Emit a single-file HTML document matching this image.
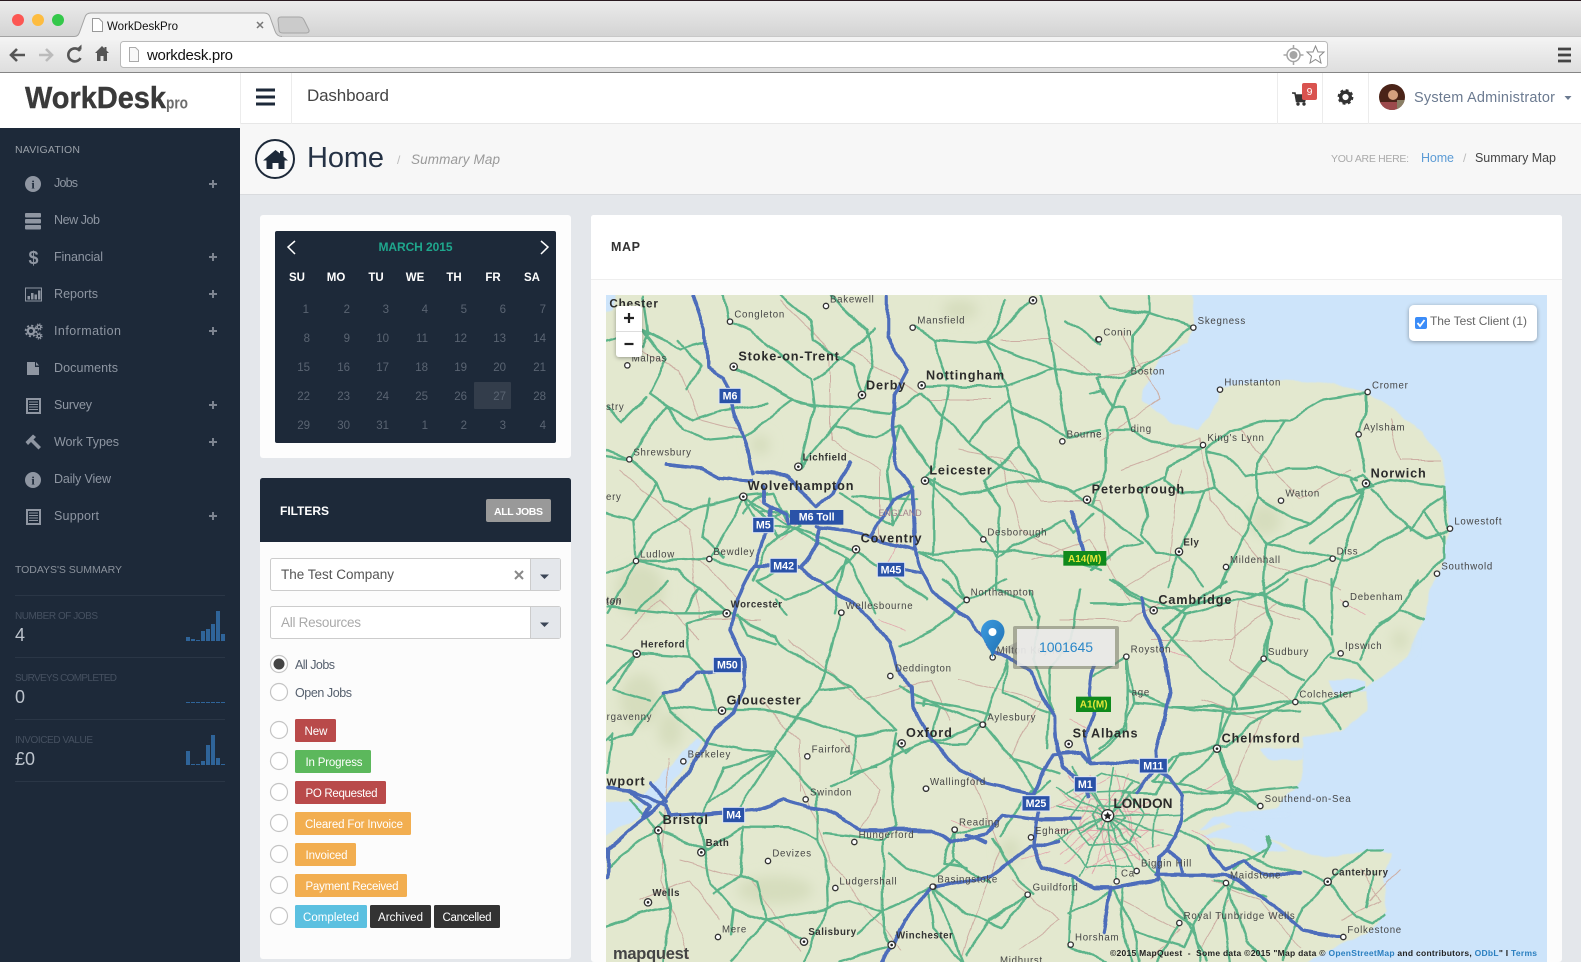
<!DOCTYPE html>
<html lang="en">
<head>
<meta charset="utf-8">
<title>WorkDeskPro</title>
<style>
html,body{margin:0;padding:0;width:1581px;height:962px;overflow:hidden;background:#e4e7eb}
svg{display:block;font-family:"Liberation Sans",sans-serif}
.g{fill:none;stroke:#5cb48a;stroke-width:7;stroke-linejoin:round;stroke-linecap:round}
.m{fill:none;stroke:#cdaea3;stroke-width:1;stroke-linejoin:round}
.r{fill:none;stroke:#e2a8ad;stroke-width:.9}
.c{font-weight:bold;font-size:38px;letter-spacing:2.6px;fill:#2b2b2b}
.s{font-size:29px;letter-spacing:2.2px;fill:#454545}
.b2{font-weight:bold;font-size:29px;letter-spacing:1.6px;fill:#333}
.sh{font-weight:bold;font-size:32px;fill:#fff;text-anchor:middle}
.nav{font-size:12.5px;fill:#8e96a2}
.sl{font-size:10px;fill:#465161}
.sv{font-size:18px;fill:#bcc3cc}
.wd{font-size:11.5px;font-weight:bold;fill:#fff;text-anchor:middle}
.dy{font-size:11.5px;fill:#5a6472;text-anchor:end}
.st{font-size:11.5px;fill:#fff;text-anchor:middle}
.tw{fill:#fff;stroke:#333;stroke-width:4}
</style>
</head>
<body>
<svg width="1581" height="962" viewBox="0 0 1581 962" xmlns="http://www.w3.org/2000/svg">
<defs>
<linearGradient id="tb" x1="0" y1="0" x2="0" y2="1"><stop offset="0" stop-color="#ececec"/><stop offset="1" stop-color="#d3d3d3"/></linearGradient>
<linearGradient id="tl" x1="0" y1="0" x2="0" y2="1"><stop offset="0" stop-color="#f4f4f4"/><stop offset="1" stop-color="#dedede"/></linearGradient>
<linearGradient id="pin" x1="0" y1="0" x2="1" y2="1"><stop offset="0" stop-color="#3d9be0"/><stop offset="1" stop-color="#1f6fb0"/></linearGradient>
<clipPath id="mc"><rect x="606" y="295" width="941" height="667"/></clipPath>
<clipPath id="av"><circle cx="1392" cy="97" r="13"/></clipPath>
<filter id="sd" x="-20%" y="-20%" width="140%" height="150%"><feDropShadow dx="0" dy="1" stdDeviation="2" flood-color="#000" flood-opacity=".35"/></filter>
<filter id="wob" filterUnits="userSpaceOnUse" x="596" y="285" width="961" height="687" color-interpolation-filters="sRGB"><feTurbulence type="fractalNoise" baseFrequency=".035" numOctaves="2" seed="4" result="n"/><feDisplacementMap in="SourceGraphic" in2="n" scale="7" xChannelSelector="R" yChannelSelector="G"/><feGaussianBlur stdDeviation=".35"/></filter>
<filter id="soft" filterUnits="userSpaceOnUse" x="596" y="285" width="961" height="687"><feGaussianBlur stdDeviation="6"/></filter>
<filter id="coast" filterUnits="userSpaceOnUse" x="596" y="285" width="961" height="687" color-interpolation-filters="sRGB"><feTurbulence type="fractalNoise" baseFrequency=".05" numOctaves="2" seed="9" result="n"/><feDisplacementMap in="SourceGraphic" in2="n" scale="6" xChannelSelector="R" yChannelSelector="G"/><feGaussianBlur stdDeviation=".5"/></filter>
</defs>

<!-- Page background -->
<rect width="1581" height="962" fill="#e4e7eb"/>

<!-- Browser chrome -->
<rect width="1581" height="37" fill="url(#tb)"/>
<rect width="1581" height="1" fill="#2a1a20"/>
<rect y="36" width="1581" height="1" fill="#9c9c9c"/>
<rect y="37" width="1581" height="35" fill="url(#tl)"/>
<rect y="72" width="1581" height="1" fill="#858585"/>
<circle cx="18" cy="20" r="6" fill="#fc5753"/><circle cx="38" cy="20" r="6" fill="#fdbc40"/><circle cx="58" cy="20" r="6" fill="#34c84a"/>
<path d="M0,36.5H74C78,36.5 79,34 80,31L85,17C86,14 88,13 91,13H264C267,13 269,14 270,17L275,31C276,34 278,36.5 282,36.5H1581V40H0Z" fill="#f3f3f3"/>
<path d="M0,36.5H74C78,36.5 79,34 80,31L85,17C86,14 88,13 91,13H264C267,13 269,14 270,17L275,31C276,34 278,36.5 282,36.5" fill="none" stroke="#a3a3a3"/>
<path d="M278,20C278,18 279,17 281,17H299C302,17 303,18 304,20L309,30C309.5,32 308,33 306,33H283C280,33 279,32 279,30Z" fill="#cbcbcb" stroke="#a5a5a5"/>
<path d="M92.5,18.5H99L102.5,22V31.5H92.5Z" fill="#fff" stroke="#999"/>
<text x="107" y="30" font-size="11.5" fill="#111" textLength="71">WorkDeskPro</text>
<path d="M257,22L263,28M263,22L257,28" stroke="#777" stroke-width="1.5"/>
<path d="M25,55H11M17,49L11,55L17,61" fill="none" stroke="#555" stroke-width="2.6"/>
<path d="M39,55H52M46,49L52,55L46,61" fill="none" stroke="#bbb" stroke-width="2.6"/>
<path d="M80,51A6.5,6.5 0 1 0 80.5,58" fill="none" stroke="#555" stroke-width="2.6"/><path d="M76,49.5H81.5V44.5Z" fill="#555"/>
<path d="M102,46L95,53H97V61H100.5V56H103.5V61H107V53H109L106.500,50.500V47H104.500V48.500Z" fill="#555"/>
<rect x="120.5" y="41.5" width="1207" height="26" rx="3" fill="#fff" stroke="#b9b9b9"/>
<path d="M129.5,47.5H135.5L138.5,50.5V61.5H129.5Z" fill="#f8f8f8" stroke="#aaa"/>
<text x="147" y="60" font-size="15" fill="#111" textLength="86">workdesk.pro</text>
<circle cx="1293.5" cy="55" r="6.5" fill="none" stroke="#a5a5a5" stroke-width="1.5"/><circle cx="1293.5" cy="55" r="4" fill="#a5a5a5"/><path d="M1293.5,45V48.5M1293.5,61.5V65M1283.5,55H1287M1300,55H1303.5" stroke="#a5a5a5" stroke-width="1.5"/>
<path d="M1315.5,46L1318,52H1324L1319.5,56.2L1321,63L1315.5,59.5L1310,63L1311.5,56.2L1307,52H1313Z" fill="#fff" stroke="#8a8a8a"/>
<path d="M1558,49H1571M1558,55H1571M1558,61H1571" stroke="#444" stroke-width="2.8"/>

<!-- App top bar -->
<rect y="73" width="1581" height="51" fill="#fff"/>
<rect y="123" x="240" width="1341" height="1" fill="#e7e7e7"/>
<rect x="0" y="73" width="240" height="55" fill="#fff"/>
<rect x="240" y="73" width="1" height="51" fill="#ececec"/><rect x="291" y="73" width="1" height="51" fill="#ececec"/>
<rect x="1277" y="73" width="1" height="51" fill="#ececec"/><rect x="1322" y="73" width="1" height="51" fill="#ececec"/><rect x="1368" y="73" width="1" height="51" fill="#ececec"/>
<text x="25" y="108" font-size="31" font-weight="bold" fill="#3a3a3a" stroke="#3a3a3a" stroke-width=".4" textLength="141" lengthAdjust="spacingAndGlyphs">WorkDesk</text>
<text x="166" y="108.5" font-size="17" font-weight="bold" fill="#6c6c6c" textLength="22" lengthAdjust="spacingAndGlyphs">pro</text>
<path d="M256,90H275M256,97H275M256,104H275" stroke="#1d2939" stroke-width="3"/>
<text x="307" y="101" font-size="17" fill="#444" textLength="82">Dashboard</text>
<path d="M1292,93H1295L1296.5,101.5H1304.5L1306.5,95H1296" fill="#333" stroke="#333" stroke-width="1.5"/><circle cx="1298" cy="104" r="1.7" fill="#333"/><circle cx="1304" cy="104" r="1.7" fill="#333"/>
<rect x="1302" y="83" width="15" height="17" rx="2" fill="#d9534f"/><text x="1309.5" y="95" font-size="10.5" fill="#fff" text-anchor="middle">9</text>
<g transform="translate(1345.5,97)"><circle r="4.8" fill="none" stroke="#333" stroke-width="3.4"/><circle r="6.7" fill="none" stroke="#333" stroke-width="2.4" stroke-dasharray="2.8 2.46"/></g>
<g clip-path="url(#av)"><rect x="1379" y="84" width="26" height="26" fill="#4a2318"/><rect x="1379" y="102" width="26" height="8" fill="#9c4a4c"/><circle cx="1393" cy="95" r="5" fill="#d59f7e"/><rect x="1397" y="100" width="8" height="10" fill="#8a7f66"/></g>
<text x="1414" y="102" font-size="14.5" fill="#6b7a90" textLength="141">System Administrator</text>
<path d="M1564.5,96H1571.5L1568,100Z" fill="#6b7a90"/>

<!-- Page heading -->
<rect x="240" y="124" width="1341" height="70" fill="#f7f7f7"/>
<rect x="240" y="194" width="1341" height="1" fill="#d9dbde"/>
<circle cx="275" cy="159" r="19" fill="#fff" fill-opacity=".4" stroke="#1d2939" stroke-width="2"/>
<path d="M275.5,150L263,160.5H266.5V169H272.5V163H278.5V169H284.5V160.5H288L283.5,156.5V151H280V153.5Z" fill="#1d2939"/>
<text x="307" y="167" font-size="29" fill="#253245" textLength="77">Home</text>
<text x="397" y="164" font-size="12" fill="#bbb">/</text>
<text x="411" y="164" font-size="13.5" font-style="italic" fill="#9a9a9a" textLength="89">Summary Map</text>
<text x="1331" y="162" font-size="10.5" fill="#aaa" textLength="78">YOU ARE HERE:</text>
<text x="1421" y="162" font-size="12.5" fill="#5b9bd5" textLength="33">Home</text>
<text x="1463" y="162" font-size="12" fill="#bbb">/</text>
<text x="1475" y="162" font-size="12.5" fill="#444" textLength="81">Summary Map</text>

<!-- Sidebar -->
<rect x="0" y="128" width="240" height="834" fill="#1d2939"/>
<text x="15" y="153" font-size="10.5" fill="#9aa0a8" textLength="65">NAVIGATION</text>
<g fill="#8f96a2">
<circle cx="33" cy="184" r="8"/><text x="33" y="188.5" font-size="12" font-weight="bold" fill="#1d2939" text-anchor="middle" font-family="Liberation Serif">i</text>
<rect x="25" y="213" width="16" height="4.5" rx="1"/><rect x="25" y="219" width="16" height="4.5" rx="1"/><rect x="25" y="225" width="16" height="4.5" rx="1"/>
<text x="33.5" y="264" font-size="18" font-weight="bold" text-anchor="middle">$</text>
<path d="M25.5,288H41.5V301H25.5Z" fill="none" stroke="#8f96a2" stroke-width="1"/><rect x="27.5" y="296" width="2.5" height="3.5"/><rect x="31" y="293" width="2.5" height="6.5"/><rect x="34.5" y="294.5" width="2.5" height="5"/><rect x="38" y="290.5" width="2.5" height="9"/>
<g transform="translate(31,331)"><circle r="3.2" fill="none" stroke="#8f96a2" stroke-width="2.4"/><circle r="5.4" fill="none" stroke="#8f96a2" stroke-width="1.8" stroke-dasharray="2.1 2.14"/></g>
<g transform="translate(39,327)"><circle r="1.8" fill="none" stroke="#8f96a2" stroke-width="1.4"/><circle r="3" fill="none" stroke="#8f96a2" stroke-width="1.2" stroke-dasharray="1.2 1.15"/></g>
<g transform="translate(39,336)"><circle r="1.8" fill="none" stroke="#8f96a2" stroke-width="1.4"/><circle r="3" fill="none" stroke="#8f96a2" stroke-width="1.2" stroke-dasharray="1.2 1.15"/></g>
<path d="M27,362H35V367H39V375H27ZM36,362L39,365.5H36Z"/>
<path d="M26,398H41V414H26ZM28,400V412H39V400Z"/><path d="M29,402H38M29,404.5H38M29,407H38M29,409.5H38" stroke="#8f96a2"/>
<path d="M25.5,442L33,434.5L36,437L33.5,439.5L41,447L38.5,449.5L31,442L28,445Z"/>
<circle cx="33" cy="480" r="8"/><text x="33" y="484.5" font-size="12" font-weight="bold" fill="#1d2939" text-anchor="middle" font-family="Liberation Serif">i</text>
<path d="M26,509H41V525H26ZM28,511V523H39V511Z"/><path d="M29,513H38M29,515.5H38M29,518H38M29,520.5H38" stroke="#8f96a2"/>
</g>
<text class="nav" x="54" y="187" textLength="24">Jobs</text>
<text class="nav" x="54" y="224" textLength="46">New Job</text>
<text class="nav" x="54" y="261" textLength="49">Financial</text>
<text class="nav" x="54" y="298" textLength="44">Reports</text>
<text class="nav" x="54" y="335" textLength="67">Information</text>
<text class="nav" x="54" y="372" textLength="64">Documents</text>
<text class="nav" x="54" y="409" textLength="38">Survey</text>
<text class="nav" x="54" y="446" textLength="65">Work Types</text>
<text class="nav" x="54" y="483" textLength="57">Daily View</text>
<text class="nav" x="54" y="520" textLength="45">Support</text>
<g fill="#7d8490"><path d="M209,183H217V185H209ZM212,180H214V188H212Z"/><path d="M209,256H217V258H209ZM212,253H214V261H212Z"/><path d="M209,293H217V295H209ZM212,290H214V298H212Z"/><path d="M209,330H217V332H209ZM212,327H214V335H212Z"/><path d="M209,404H217V406H209ZM212,401H214V409H212Z"/><path d="M209,441H217V443H209ZM212,438H214V446H212Z"/><path d="M209,515H217V517H209ZM212,512H214V520H212Z"/></g>
<text x="15" y="573" font-size="10.5" fill="#8b929c" textLength="107">TODAYS'S SUMMARY</text>
<g fill="#2a3646"><rect x="15" y="595" width="210" height="1"/><rect x="15" y="657" width="210" height="1"/><rect x="15" y="719" width="210" height="1"/><rect x="15" y="781" width="210" height="1"/></g>
<text class="sl" x="15" y="619" textLength="83">NUMBER OF JOBS</text><text class="sv" x="15" y="641">4</text>
<text class="sl" x="15" y="681" textLength="102">SURVEYS COMPLETED</text><text class="sv" x="15" y="703">0</text>
<text class="sl" x="15" y="743" textLength="78">INVOICED VALUE</text><text class="sv" x="15" y="765">£0</text>
<g fill="#2f6499">
<rect x="186" y="637" width="4" height="4"/><rect x="191" y="639" width="4" height="2"/><rect x="196" y="640" width="4" height="1"/><rect x="201" y="631" width="4" height="10"/><rect x="206" y="629" width="4" height="12"/><rect x="211" y="624" width="4" height="17"/><rect x="216" y="611" width="4" height="30"/><rect x="221" y="634" width="4" height="7"/>
<rect x="186" y="702" width="4" height="1"/><rect x="191" y="702" width="4" height="1"/><rect x="196" y="702" width="4" height="1"/><rect x="201" y="702" width="4" height="1"/><rect x="206" y="702" width="4" height="1"/><rect x="211" y="702" width="4" height="1"/><rect x="216" y="702" width="4" height="1"/><rect x="221" y="702" width="4" height="1"/>
<rect x="186" y="751" width="4" height="14"/><rect x="191" y="764" width="4" height="1"/><rect x="196" y="764" width="4" height="1"/><rect x="201" y="761" width="4" height="4"/><rect x="206" y="745" width="4" height="20"/><rect x="211" y="735" width="4" height="30"/><rect x="216" y="758" width="4" height="7"/><rect x="221" y="764" width="4" height="1"/>
</g>

<!-- Calendar card -->
<rect x="260" y="215" width="311" height="243" rx="3" fill="#fdfdfd"/>
<rect x="275" y="231" width="281" height="212" rx="2" fill="#1d2939"/>
<path d="M295,241L288,247L295,254M541,241L548,247L541,254" fill="none" stroke="#fff" stroke-width="1.5"/>
<text x="415.5" y="251" font-size="12" font-weight="bold" fill="#1fa78d" text-anchor="middle" textLength="74">MARCH 2015</text>
<text class="wd" x="297" y="281">SU</text><text class="wd" x="336" y="281">MO</text><text class="wd" x="376" y="281">TU</text><text class="wd" x="415" y="281">WE</text><text class="wd" x="454" y="281">TH</text><text class="wd" x="493" y="281">FR</text><text class="wd" x="532" y="281">SA</text>
<rect x="474" y="382" width="37" height="27" rx="1" fill="#333d4b"/>
<text class="dy" x="309" y="313">1</text><text class="dy" x="350" y="313">2</text><text class="dy" x="389" y="313">3</text><text class="dy" x="428" y="313">4</text><text class="dy" x="467" y="313">5</text><text class="dy" x="506" y="313">6</text><text class="dy" x="546" y="313">7</text>
<text class="dy" x="310" y="342">8</text><text class="dy" x="350" y="342">9</text><text class="dy" x="389" y="342">10</text><text class="dy" x="428" y="342">11</text><text class="dy" x="467" y="342">12</text><text class="dy" x="506" y="342">13</text><text class="dy" x="546" y="342">14</text>
<text class="dy" x="310" y="371">15</text><text class="dy" x="350" y="371">16</text><text class="dy" x="389" y="371">17</text><text class="dy" x="428" y="371">18</text><text class="dy" x="467" y="371">19</text><text class="dy" x="506" y="371">20</text><text class="dy" x="546" y="371">21</text>
<text class="dy" x="310" y="400">22</text><text class="dy" x="350" y="400">23</text><text class="dy" x="389" y="400">24</text><text class="dy" x="428" y="400">25</text><text class="dy" x="467" y="400">26</text><text class="dy" x="506" y="400">27</text><text class="dy" x="546" y="400">28</text>
<text class="dy" x="310" y="429">29</text><text class="dy" x="350" y="429">30</text><text class="dy" x="389" y="429">31</text><text class="dy" x="428" y="429">1</text><text class="dy" x="467" y="429">2</text><text class="dy" x="506" y="429">3</text><text class="dy" x="546" y="429">4</text>

<!-- Filters card -->
<rect x="260" y="478" width="311" height="481" rx="3" fill="#fcfcfc"/>
<path d="M260,542V481C260,479 261,478 263,478H568C570,478 571,479 571,481V542Z" fill="#1d2939"/>
<text x="280" y="515" font-size="12" font-weight="bold" fill="#fff" textLength="49">FILTERS</text>
<rect x="486" y="499" width="65" height="23" rx="2" fill="#999"/>
<text x="518.5" y="515" font-size="10.5" font-weight="bold" fill="#fff" text-anchor="middle" textLength="49">ALL JOBS</text>
<rect x="270.5" y="558.5" width="290" height="32" rx="2" fill="#fff" stroke="#ccc"/>
<rect x="530" y="559" width="30" height="31" fill="#e4e7eb"/><rect x="530" y="559" width="1" height="31" fill="#ccc"/>
<path d="M540,574.5H549L544.5,579Z" fill="#3a4556"/>
<text x="281" y="579" font-size="13.5" fill="#555" textLength="113">The Test Company</text>
<path d="M515,571L523,579M523,571L515,579" stroke="#888" stroke-width="2"/>
<rect x="270.5" y="606.5" width="290" height="32" rx="2" fill="#fff" stroke="#ccc"/>
<rect x="530" y="607" width="30" height="31" fill="#e4e7eb"/><rect x="530" y="607" width="1" height="31" fill="#ccc"/>
<path d="M540,622.5H549L544.5,627Z" fill="#3a4556"/>
<text x="281" y="627" font-size="13.5" fill="#aaa" textLength="80">All Resources</text>
<g fill="#fff" stroke="#c4c4c4" stroke-width="1.2">
<circle cx="279" cy="664" r="8.5"/><circle cx="279" cy="692" r="8.5"/><circle cx="279" cy="730" r="8.5"/><circle cx="279" cy="761" r="8.5"/><circle cx="279" cy="792" r="8.5"/><circle cx="279" cy="823" r="8.5"/><circle cx="279" cy="854" r="8.5"/><circle cx="279" cy="885" r="8.5"/><circle cx="279" cy="916" r="8.5"/></g>
<circle cx="279" cy="664" r="5.5" fill="#444"/>
<text x="295" y="669" font-size="12.5" fill="#56606e" textLength="40">All Jobs</text>
<text x="295" y="697" font-size="12.5" fill="#56606e" textLength="57">Open Jobs</text>
<rect x="295" y="719" width="41" height="23" rx="1.5" fill="#b94a4a"/><text class="st" x="316" y="735">New</text>
<rect x="295" y="750" width="76" height="23" rx="1.5" fill="#5cb85c"/><text class="st" x="334" y="766" textLength="57">In Progress</text>
<rect x="295" y="781" width="91" height="23" rx="1.5" fill="#b94a4a"/><text class="st" x="341.500" y="797" textLength="72">PO Requested</text>
<rect x="295" y="812" width="116" height="23" rx="1.5" fill="#f2ae50"/><text class="st" x="354" y="828" textLength="98">Cleared For Invoice</text>
<rect x="295" y="843" width="61" height="23" rx="1.5" fill="#f2ae50"/><text class="st" x="326.500" y="859" textLength="42">Invoiced</text>
<rect x="295" y="874" width="112" height="23" rx="1.5" fill="#f2ae50"/><text class="st" x="352" y="890" textLength="93">Payment Received</text>
<rect x="295" y="905" width="72" height="23" rx="1.5" fill="#5bc0e0"/><text class="st" x="331" y="921" textLength="56">Completed</text>
<rect x="370" y="905" width="61" height="23" rx="1.5" fill="#333"/><text class="st" x="400.5" y="921" textLength="45">Archived</text>
<rect x="434" y="905" width="66" height="23" rx="1.5" fill="#333"/><text class="st" x="467" y="921" textLength="49">Cancelled</text>

<!-- Map card -->
<rect x="591" y="215" width="971" height="747" rx="3" fill="#fcfcfc"/>
<path d="M591,279V218C591,216 592,215 594,215H1559C1561,215 1562,216 1562,218V279Z" fill="#fff"/>
<rect x="591" y="279" width="971" height="1" fill="#eeeeee"/>
<text x="611" y="251" font-size="12.5" font-weight="bold" fill="#333" textLength="29">MAP</text>

<g clip-path="url(#mc)">
<rect x="606" y="295" width="941" height="667" fill="#cde4fa"/>
<g filter="url(#coast)">
<path d="M596,285H1192L1193,328L1187,343L1160,357L1143,390L1142,400L1170,423L1198,430L1218,403L1220,387L1277,380L1323,383L1367,392L1390,407L1423,433L1443,460L1447,500L1450,530L1443,560L1430,590L1423,623L1407,657L1377,680L1367,687L1367,710L1342,733L1303,737L1302,780L1277,807L1213,817L1200,830L1223,823L1303,850L1323,857L1380,850L1393,853L1383,880L1387,913L1367,933L1323,953L1290,972H596Z" fill="#e3e8cf"/>
<path d="M600,800L643,803L640,817L617,830L600,840Z" fill="#cde4fa"/>
<path d="M640,800L660,777L697,737L702,742L672,782L650,812Z" fill="#cde4fa"/>
<path d="M600,290H617L612,310L600,312Z" fill="#cde4fa"/>
<path d="M1260,750L1303,747L1302,760L1268,760Z" fill="#cde4fa"/>
<path d="M1330,680L1365,680L1367,690L1335,693Z" fill="#cde4fa"/>
<ellipse cx="1270" cy="815" rx="20" ry="3" fill="#cde4fa"/>
<path d="M1200,835L1240,825L1290,850L1260,852L1230,840Z" fill="#cde4fa"/>
</g>
<g fill="#d6ddbd" filter="url(#soft)">
<ellipse cx="775" cy="890" rx="38" ry="14"/><ellipse cx="1265" cy="520" rx="16" ry="16"/><ellipse cx="670" cy="730" rx="12" ry="18"/><ellipse cx="760" cy="445" rx="10" ry="10"/><ellipse cx="1400" cy="640" rx="8" ry="10"/><ellipse cx="640" cy="590" rx="24" ry="26"/><ellipse cx="640" cy="700" rx="20" ry="26"/><ellipse cx="960" cy="310" rx="18" ry="10"/><ellipse cx="1010" cy="850" rx="10" ry="12"/>
</g>

<g filter="url(#wob)">
<!-- Minor roads -->
<path class="m" d="M640,350L680,370L700,420L740,430M620,470L690,530L700,620L760,620M640,560L700,560L740,600M780,300L830,350L830,440L880,470L880,540M850,350L930,400L990,400M960,450L1010,460L1040,500L1100,500L1110,560M1000,340L1050,340L1100,380L1180,350M1120,470L1200,440L1210,500L1260,560L1340,590M1240,430L1300,500L1350,470M1440,460L1400,460L1390,420M1300,620L1240,600L1230,660L1290,700M1150,640L1230,640L1280,600M1200,700L1260,720L1230,790M1060,620L1130,620L1170,600M790,640L860,700L930,680L950,720M800,780L830,860L860,900L900,950M680,860L750,880L800,950M670,760L660,880L690,960M960,680L1040,700L1010,760M970,770L1000,850L960,960M1130,600L1090,540L1030,560M1210,880L1260,900L1300,950M1360,870L1380,900L1340,920M1000,460L1020,530L1080,560M620,640L660,600L700,640M1120,330L1160,400L1100,440M1180,470L1170,560L1120,590M840,740L880,790L860,830M760,700L800,740L800,790M640,900L690,880L720,920M1010,880L1060,920L1020,950M1120,900L1180,930L1150,960M1230,900L1200,950M1400,870L1370,900"/>
<!-- London street mesh -->
<path class="r" d="M1060,790L1140,860M1060,805L1160,815M1075,850L1150,800M1090,775L1110,870M1130,775L1092,875M1055,830L1165,830M1070,775L1150,855M1145,780L1065,865M1075,790L1130,860M1050,810L1115,775M1100,865L1160,845M1085,870L1150,830M1065,840L1120,790M1115,770L1140,860M1060,855L1135,790M1090,800L1120,800L1130,830L1100,845L1080,825Z"/>
<path class="r" d="M1190,830L1215,845M1200,790L1225,775M1020,860L1050,850M760,500L790,525M780,540L810,510M900,540L880,575M1340,600L1365,615M950,820L975,830M1070,720L1090,730M1170,650L1190,660M880,620L905,630"/>

<!-- Main roads: midlands -->
<g transform="translate(600,280) scale(.33333)">
<path class="g" d="M20,180L130,150L240,210L320,190M130,50L145,165L130,200M130,150L200,240L150,340L200,375L280,420L360,395L500,370M200,375L130,470L90,540L20,510M90,540L170,610L190,660L280,690L430,650M200,375L250,450L310,480L430,470L500,420L580,360M390,125L450,150L490,185L630,300L640,380L600,560M540,45L630,120L640,180L760,260L790,345M400,260L600,370L780,390L870,400L960,340M600,560L700,440L790,345M700,440L830,470L900,440L990,570M690,45L800,150L820,260L790,345M940,140L1000,180L1160,190L1300,60M1160,190L1220,310L1240,380L1260,500L1330,600L1460,660M1160,190L1360,265L1500,290M965,320L1050,320L1220,320L1360,265M1050,320L1010,500L1000,560L970,600M965,340L1040,420L1110,490L1200,560L1330,600M1230,360L1150,430L1110,490M1320,45L1350,180L1380,340L1400,470M975,600L1080,640L1180,620L1320,600M975,600L1100,720L1150,770L1190,830L1240,800L1400,720M960,820L1200,810L1390,830M1200,680L1190,830L1190,930L1270,960L1300,1020M1100,960L1030,840L960,820M20,530L90,540M110,845L20,880M110,845L160,760L280,690M110,845L330,835L440,870M330,835L430,660M330,660L310,770L370,830M570,740L440,660M570,740L770,810L980,960M570,740L500,800L460,900M570,740L640,780L740,830L830,1000M720,640L880,740L940,620M380,1000L300,920L230,870L110,845M110,1000L200,900M20,1000L110,845M560,860L470,900L560,960L700,900L770,810M700,1000L740,830M430,650L520,640L570,740L480,740ZM460,680L500,720L550,690M430,700L470,660L500,640M1480,700L1420,760L1400,720M1390,830L1500,870"/>
<path class="g" d="M370,45L385,125M1500,600L1420,640L1330,600M640,380L580,360M760,650L950,660M820,150L700,260L640,300M1000,180L1040,300M1220,60L1160,190M1400,120L1500,190M1240,380L1400,470L1500,450M1260,500L1150,600L1200,680M1000,600L1000,820M900,440L860,570L880,740M230,180L300,260L260,330M140,350L60,430L20,380M20,700L100,720L110,845M170,610L100,720M250,1000L300,920M530,960L560,1010M480,700L560,690L600,740L530,770Z"/>
</g>
<!-- South-west -->
<g transform="translate(590,600) scale(.33333)">
<path class="g" d="M50,20L230,40L400,40M410,40L560,110L570,130L720,230L780,260L920,390M750,40L690,270L620,350L555,450L680,580L680,620M555,460L460,450L350,430L240,330L220,280M50,140L140,160L300,170L340,210L380,330L240,320M140,160L70,270L180,300M560,130L470,100L440,50M400,330L520,330L620,350L800,410L920,390M555,460L490,560L430,650M555,460L350,610L330,680L360,850L430,930L530,960L700,930L780,900L880,930L1030,860M205,690L350,750L460,680L450,830L370,880M205,690L240,920L220,1086M680,620L680,720L710,780L715,920L640,1086M880,720L880,1000L900,1040M900,760L950,800L1030,830L1090,780L1090,700M640,1020L530,960L420,1086M50,980L150,940L240,920M920,400L900,500L910,600L920,680M1000,320L1000,300L1100,320L1200,340M1180,370L1060,420L990,430L850,500L720,560M970,440L950,460L920,430M50,420L70,400L50,520M50,800L100,760L200,690M1030,860L1090,1000L1120,1086M750,1086L900,1040M190,690L230,660L210,640"/>
<path class="g" d="M50,250L140,160M120,600L200,690M300,170L290,70L400,40M220,280L130,400L60,420M690,270L780,260M800,410L780,520L860,500M350,610L400,500L555,460M920,680L880,720L700,700M460,680L600,680L680,720M430,930L420,1000M800,1000L880,930M1090,700L1200,680M1090,780L1200,850M530,960L500,850L450,830"/>
</g>
<!-- Central south / London -->
<g transform="translate(900,580) scale(.33333)">
<path class="g" d="M0,200L100,150L200,60M200,60L320,0M200,60L130,0M390,30L420,110L400,240M540,30L520,170L450,270L440,500M640,0L720,50L860,100L1090,40M860,100L800,200M1090,40L1110,120L1100,230L1000,350L990,400L950,500M680,230L580,290M680,230L680,330L680,450L560,545M320,240L250,430L120,380L50,370M250,430L200,490L90,490M250,430L340,540L400,620M320,240L310,340L460,400M810,380L900,390L1010,400L1200,390M950,500L820,530L760,600M950,500L1000,640L1080,680"/>
<path class="g" style="stroke-width:5" d="M620,710L470,620M620,710L520,560M620,710L640,560M620,710L740,600M620,710L840,700M620,710L830,770M620,710L770,880M620,710L650,900M620,710L540,890M620,710L430,790M620,710L470,680M620,710L560,600M620,710L710,880M620,710L700,610M620,710L540,760M620,710L720,770M560,640L680,635L730,700L690,785L570,795L510,720ZM590,680L650,675L670,715L640,750L590,745L570,710ZM500,640L600,580L720,610M470,760L560,860L700,860M770,680L760,800"/>
<path class="g" d="M90,940L100,1050L190,1146M100,920L200,1000L300,1040M390,940L270,1020L200,1120M520,900L510,1100M640,930L700,1050L720,1146M780,900L800,980L880,1040L900,1146M980,910L900,1000L850,1100M980,910L1040,1080L1100,1146M940,900L1100,950M1100,770L1110,800L1000,870M160,750L130,850L200,860M280,780L350,900L400,940M450,600L400,640M340,540L480,580M0,320L120,380M120,380L90,490M400,240L460,400M680,330L810,380M1000,640L1190,620M760,600L1000,640M300,770L400,620M300,1040L390,940M510,1000L640,930M700,1050L850,1100M510,1100L620,1146"/>
</g>
<!-- East Anglia -->
<g transform="translate(1090,210) scale(.33333)">
<path class="g" d="M30,255L60,295L180,310L300,350M180,255L180,310L130,380L130,470L100,500L20,510M300,355L210,440L150,480L100,500M100,510L50,640L50,780L10,880M0,550L40,540L70,590L100,590L120,660L190,690L260,715L340,715M20,510L40,550M60,660L120,660M340,715L230,770L220,810L280,850L340,845L370,830M220,800L150,840M350,725L370,830L450,900L530,1000L720,1040L770,1050L840,1020L950,950L1010,985L1060,970L1075,960L1060,870L1060,830L900,810L820,835M350,725L410,740L470,800L560,780L600,770L680,770L800,810M350,720L420,665L530,630L600,630L700,570L830,550L830,610L805,680L825,780M585,630L500,760L500,860L470,960L390,1130M820,840L790,940L720,1140M845,840L950,950M820,840L745,870L660,940L530,1000M1060,860L1000,900L960,960M160,1000L100,1010L0,1080M150,970L200,1030L260,1030L300,970L340,850M266,1030L340,1130M230,1130L266,1030M155,840L170,920L150,970M530,1000L520,1140M720,1050L590,1090L520,1140M1060,980L1060,1050L960,1140M780,810L820,790L850,830L800,840ZM820,840L760,930L660,1000M1000,900L1060,1000M0,880L160,1000M500,860L600,920L660,940"/>
</g>
<g transform="translate(1090,580) scale(.33333)">
<path class="g" d="M60,0L150,60L190,90M0,70L150,70M290,85L220,150M190,90L290,80L440,30L520,50L640,90L720,170L730,210L650,300L610,360L500,380L410,390L370,380L240,380M520,0L520,50L540,130L520,230L430,350L440,380M590,0L520,50M720,0L725,160M725,230L800,250L850,300M930,90L840,160L810,240M980,0L930,90L870,130M110,230L125,330L130,370L240,380M610,360L700,370L750,450M700,370L820,320M610,360L480,430L410,500L270,520L230,580M400,390L385,500L430,620L510,680M380,510L320,570L270,610M430,630L280,640M280,720L350,690L410,670L440,630M270,750L350,800L420,810M535,770L545,790L520,830M640,880L715,905L750,950L800,1010L850,1030L880,1000M715,905L830,810L880,810M715,905L640,980L610,1040L580,1146M850,880L830,980M430,900L400,1000L420,1146M210,900L280,1000L350,1146M270,1030L200,1146M100,920L90,1040L130,1146M420,810L560,860L630,885M290,85L410,0M640,90L650,0M220,150L300,240L430,350M520,230L640,300M930,90L1000,120M230,580L200,640L100,640M130,370L100,450L30,500"/>
</g>
<!-- Motorways -->
<path id="mw" fill="none" stroke="#4d6dbb" stroke-width="3.4" stroke-linejoin="round" stroke-linecap="round" d="M693,295L705,330L707,368L725,377L730,395L738,423L748,450L753,473M667,464L700,468L717,477L752,480M757,472L787,475L800,490L817,507L833,493L850,463M763,487L765,503L772,507L763,540L755,563L743,587L737,600L730,630L743,657L745,687L733,713L715,728L690,770L667,800L633,827L607,850L606,877M773,507L787,513L788,523M817,527L860,533L883,543L915,550M820,530L817,543L800,567L755,565M800,567L827,587L853,603L870,620L890,643L900,675L912,687L913,707L930,740L960,770L987,783L1033,793M888,295L888,337L907,370L895,393L893,427L897,467L913,490L915,547L922,570L933,593L967,617L993,650L1030,670L1040,693L1055,717L1057,750L1063,767L1083,780L1088,797M872,537L893,500L913,490M905,570L922,573M1072,510L1083,550M1093,667L1090,693L1095,713L1085,740L1090,762M1142,598L1145,617L1163,647L1170,690L1163,727L1157,750L1157,765M1153,770L1138,793M1033,793L1043,770L1053,755L1080,753L1090,763L1113,762L1153,765L1170,777L1183,797L1180,820L1175,837L1160,857L1158,880L1113,888L1093,888L1073,877L1043,867L1033,847L1038,813L1033,793M607,788L627,790L647,797L667,807L670,817L723,813L757,810L783,800L807,807L827,810L860,830L890,830L933,830L950,843L987,835L1003,815L1040,820L1080,820M650,782L667,803M627,790L650,807L643,817M967,835L987,843M883,962L903,920L933,887L990,877L1030,847L1057,840M663,692L678,690L697,672L737,670M1208,847L1225,870L1243,863L1263,873L1300,875M1157,875L1223,875L1237,880L1277,908L1303,930L1343,937M1110,890L1103,933M1167,850L1180,860L1183,872"/>
<use href="#mw" style="stroke:#8ba6df;stroke-width:1"/>
</g>

<!-- Towns and cities -->
<g transform="translate(600,280) scale(.33333)">
<circle class="tw" cx="390" cy="125" r="8"/><circle class="tw" cx="678" cy="78" r="8"/><circle class="tw" cx="938" cy="143" r="8"/><circle class="tw" cx="82" cy="256" r="8"/><circle class="tw" cx="1387" cy="484" r="8"/><circle class="tw" cx="88" cy="538" r="8"/><circle class="tw" cx="108" cy="843" r="8"/><circle class="tw" cx="328" cy="837" r="8"/><circle class="tw" cx="1150" cy="778" r="8"/><circle class="tw" cx="1100" cy="959" r="8"/><circle class="tw" cx="724" cy="998" r="8"/><circle class="tw" cx="1495" cy="178" r="8"/>
<g fill="#fff" stroke="#333" stroke-width="4"><circle cx="401" cy="260" r="11"/><circle cx="786" cy="345" r="11"/><circle cx="965" cy="316" r="11"/><circle cx="595" cy="560" r="11"/><circle cx="975" cy="602" r="11"/><circle cx="430" cy="650" r="11"/><circle cx="768" cy="808" r="11"/><circle cx="380" cy="1000" r="11"/><circle cx="1461" cy="659" r="11"/><circle cx="1299" cy="61" r="11"/></g>
<g fill="#222"><circle cx="401" cy="260" r="4"/><circle cx="786" cy="345" r="4"/><circle cx="965" cy="316" r="4"/><circle cx="595" cy="560" r="4"/><circle cx="975" cy="602" r="4"/><circle cx="430" cy="650" r="4"/><circle cx="768" cy="808" r="4"/><circle cx="380" cy="1000" r="4"/><circle cx="1461" cy="659" r="4"/><circle cx="1299" cy="61" r="4"/></g>
<text class="c" x="28" y="82" style="font-size:35px">Chester</text><text class="s" x="690" y="68">Bakewell</text><text class="s" x="403" y="113">Congleton</text><text class="s" x="952" y="130">Mansfield</text><text class="s" x="95" y="245">Malpas</text>
<text class="c" x="415" y="241">Stoke-on-Trent</text><text class="c" x="978" y="298">Nottingham</text><text class="c" x="798" y="328">Derby</text><text class="s" x="18" y="390">stry</text><text class="s" x="1400" y="472">Bourne</text><text class="s" x="100" y="527">Shrewsbury</text>
<text class="b2" x="608" y="541">Lichfield</text><text class="c" x="988" y="584">Leicester</text><text class="c" x="443" y="630">Wolverhampton</text><text class="s" x="18" y="660">ery</text>
<text x="835" y="708" font-size="27" fill="#a3828c">ENGLAND</text><text class="s" x="1162" y="767">Desborough</text><text class="c" x="782" y="788">Coventry</text><text class="s" x="120" y="832">Ludlow</text><text class="s" x="340" y="825">Bewdley</text><text class="s" x="1112" y="947">Northampton</text><text class="b2" x="392" y="982">Worcester</text><text class="s" x="737" y="987">Wellesbourne</text><text class="s" x="18" y="975">ton</text>
</g>
<g transform="translate(590,600) scale(.33333)">
<circle class="tw" cx="754" cy="38" r="8"/><circle class="tw" cx="901" cy="228" r="8"/><circle class="tw" cx="280" cy="484" r="8"/><circle class="tw" cx="652" cy="469" r="8"/><circle class="tw" cx="647" cy="598" r="8"/><circle class="tw" cx="793" cy="726" r="8"/><circle class="tw" cx="534" cy="783" r="8"/><circle class="tw" cx="736" cy="864" r="8"/><circle class="tw" cx="384" cy="1011" r="8"/><circle class="tw" cx="1179" cy="374" r="8"/><circle class="tw" cx="1008" cy="566" r="8"/><circle class="tw" cx="1094" cy="689" r="8"/><circle class="tw" cx="1030" cy="860" r="8"/>
<g fill="#fff" stroke="#333" stroke-width="4"><circle cx="140" cy="161" r="11"/><circle cx="396" cy="332" r="11"/><circle cx="935" cy="430" r="11"/><circle cx="205" cy="691" r="11"/><circle cx="334" cy="757" r="11"/><circle cx="174" cy="907" r="11"/><circle cx="642" cy="1025" r="11"/><circle cx="905" cy="1035" r="11"/></g>
<g fill="#222"><circle cx="140" cy="161" r="4"/><circle cx="396" cy="332" r="4"/><circle cx="935" cy="430" r="4"/><circle cx="205" cy="691" r="4"/><circle cx="334" cy="757" r="4"/><circle cx="174" cy="907" r="4"/><circle cx="642" cy="1025" r="4"/><circle cx="905" cy="1035" r="4"/></g>
<text class="b2" x="152" y="143">Hereford</text><text class="c" x="410" y="313">Gloucester</text><text class="s" x="50" y="360">rgavenny</text><text class="s" x="293" y="472">Berkeley</text><text class="s" x="665" y="458">Fairford</text><text class="c" x="50" y="556">wport</text><text class="s" x="660" y="586">Swindon</text><text class="c" x="218" y="672">Bristol</text><text class="b2" x="347" y="738">Bath</text><text class="s" x="806" y="714">Hungerford</text><text class="s" x="547" y="770">Devizes</text><text class="s" x="748" y="853">Ludgershall</text><text class="b2" x="187" y="888">Wells</text><text class="s" x="396" y="998">Mere</text><text class="b2" x="655" y="1005">Salisbury</text><text class="b2" x="918" y="1016">Winchester</text><text class="s" x="50" y="10">ton</text><text class="s" x="915" y="215">Deddington</text><text class="c" x="948" y="411">Oxford</text>
</g>
<g transform="translate(900,580) scale(.33333)">
<circle class="tw" cx="200" cy="60" r="8"/><circle class="tw" cx="248" cy="434" r="8"/><circle class="tw" cx="78" cy="626" r="8"/><circle class="tw" cx="164" cy="749" r="8"/><circle class="tw" cx="393" cy="772" r="8"/><circle class="tw" cx="98" cy="920" r="8"/><circle class="tw" cx="383" cy="944" r="8"/><circle class="tw" cx="512" cy="1094" r="8"/><circle class="tw" cx="278" cy="232" r="8"/>
<circle cx="506" cy="492" r="11" fill="#fff" stroke="#333" stroke-width="4"/><circle cx="506" cy="492" r="4" fill="#222"/>
<circle cx="623" cy="707" r="18" fill="#fff" stroke="#333" stroke-width="4"/><path d="M623,695L627,703L636,704L629,710L631,719L623,714L615,719L617,710L610,704L619,703Z" fill="#222"/>
<text class="c" x="518" y="473">St Albans</text><text class="s" x="262" y="422">Aylesbury</text><text class="s" x="90" y="615">Wallingford</text><text class="s" x="177" y="737">Reading</text><text class="s" x="405" y="762">Egham</text><text class="s" x="112" y="907">Basingstoke</text><text class="s" x="398" y="932">Guildford</text><text class="s" x="525" y="1082">Horsham</text><text class="s" x="300" y="1150">Midhurst</text><text class="s" x="290" y="220">Milton Keynes</text>
</g>
<g transform="translate(1090,210) scale(.33333)">
<circle class="tw" cx="310" cy="353" r="8"/><circle class="tw" cx="27" cy="388" r="8"/><circle class="tw" cx="390" cy="539" r="8"/><circle class="tw" cx="833" cy="546" r="8"/><circle class="tw" cx="806" cy="673" r="8"/><circle class="tw" cx="339" cy="705" r="8"/><circle class="tw" cx="573" cy="872" r="8"/><circle class="tw" cx="1080" cy="956" r="8"/><circle class="tw" cx="728" cy="1046" r="8"/><circle class="tw" cx="408" cy="1071" r="8"/><circle class="tw" cx="1041" cy="1091" r="8"/>
<circle cx="828" cy="820" r="11" fill="#fff" stroke="#333" stroke-width="4"/><circle cx="828" cy="820" r="4" fill="#222"/><circle cx="267" cy="1025" r="11" fill="#fff" stroke="#333" stroke-width="4"/><circle cx="267" cy="1025" r="4" fill="#222"/>
<text class="s" x="323" y="342">Skegness</text><text class="s" x="40" y="376">Conin</text><text class="s" x="122" y="493">Boston</text><text class="s" x="403" y="527">Hunstanton</text><text class="s" x="846" y="535">Cromer</text><text class="s" x="122" y="666">ding</text><text class="s" x="0" y="682">ne</text><text class="s" x="820" y="661">Aylsham</text><text class="s" x="352" y="693">King's Lynn</text><text class="c" x="842" y="802">Norwich</text><text class="c" x="5" y="850">Peterborough</text><text class="s" x="586" y="860">Watton</text><text class="s" x="1093" y="944">Lowestoft</text><text class="b2" x="280" y="1007">Ely</text><text class="s" x="740" y="1034">Diss</text><text class="s" x="420" y="1059">Mildenhall</text><text class="s" x="1054" y="1079">Southwold</text>
</g>
<g transform="translate(1090,580) scale(.33333)">
<circle class="tw" cx="109" cy="230" r="8"/><circle class="tw" cx="521" cy="236" r="8"/><circle class="tw" cx="767" cy="72" r="8"/><circle class="tw" cx="752" cy="220" r="8"/><circle class="tw" cx="616" cy="366" r="8"/><circle class="tw" cx="511" cy="678" r="8"/><circle class="tw" cx="140" cy="873" r="8"/><circle class="tw" cx="80" cy="904" r="8"/><circle class="tw" cx="408" cy="909" r="8"/><circle class="tw" cx="268" cy="1029" r="8"/><circle class="tw" cx="760" cy="1071" r="8"/>
<circle cx="191" cy="91" r="11" fill="#fff" stroke="#333" stroke-width="4"/><circle cx="191" cy="91" r="4" fill="#222"/><circle cx="381" cy="506" r="11" fill="#fff" stroke="#333" stroke-width="4"/><circle cx="381" cy="506" r="4" fill="#222"/><circle cx="713" cy="905" r="11" fill="#fff" stroke="#333" stroke-width="4"/><circle cx="713" cy="905" r="4" fill="#222"/>
<text class="c" x="205" y="72">Cambridge</text><text class="s" x="122" y="217">Royston</text><text class="s" x="534" y="225">Sudbury</text><text class="s" x="780" y="60">Debenham</text><text class="s" x="765" y="207">Ipswich</text><text class="s" x="125" y="346">age</text><text class="s" x="628" y="353">Colchester</text><text class="c" x="395" y="487">Chelmsford</text><text class="s" x="524" y="666">Southend-on-Sea</text>
<text x="70" y="684" font-size="41" font-weight="bold" fill="#2b2b2b">LONDON</text>
<text class="b2" x="725" y="887">Canterbury</text><text class="s" x="153" y="860">Biggin Hill</text><text class="s" x="93" y="890">Ca</text><text class="s" x="420" y="896">Maidstone</text><text class="s" x="281" y="1017">Royal Tunbridge Wells</text><text class="s" x="772" y="1059">Folkestone</text>
</g>

<!-- Road shields -->
<g transform="translate(600,280) scale(.33333)">
<rect x="357" y="325" width="66" height="46" fill="#2a52a8" stroke="#dfe6f5" stroke-width="3"/><text class="sh" x="390" y="359">M6</text>
<rect x="458" y="712" width="64" height="46" fill="#2a52a8" stroke="#dfe6f5" stroke-width="3"/><text class="sh" x="490" y="746">M5</text>
<rect x="570" y="690" width="160" height="44" fill="#2a52a8"/><text class="sh" x="650" y="722">M6 Toll</text>
<rect x="510" y="835" width="82" height="44" fill="#2a52a8" stroke="#dfe6f5" stroke-width="3"/><text class="sh" x="551" y="868">M42</text>
<rect x="832" y="847" width="82" height="44" fill="#2a52a8" stroke="#dfe6f5" stroke-width="3"/><text class="sh" x="873" y="880">M45</text>
<rect x="1390" y="813" width="129" height="44" fill="#0f8a1c"/><text class="sh" x="1454" y="846" style="fill:#e4e63a;font-size:30px">A14(M)</text>
</g>
<g transform="translate(900,580) scale(.33333)">
<rect x="528" y="350" width="105" height="46" fill="#0f8a1c"/><text class="sh" x="581" y="383" style="fill:#e4e63a;font-size:30px">A1(M)</text>
<rect x="718" y="535" width="84" height="44" fill="#2a52a8" stroke="#dfe6f5" stroke-width="3"/><text class="sh" x="760" y="568">M11</text>
<rect x="523" y="590" width="66" height="46" fill="#2a52a8" stroke="#dfe6f5" stroke-width="3"/><text class="sh" x="556" y="624">M1</text>
<rect x="366" y="647" width="84" height="46" fill="#2a52a8" stroke="#dfe6f5" stroke-width="3"/><text class="sh" x="408" y="681">M25</text>
</g>
<g transform="translate(590,600) scale(.33333)">
<rect x="370" y="172" width="84" height="46" fill="#2a52a8" stroke="#dfe6f5" stroke-width="3"/><text class="sh" x="412" y="206">M50</text>
<rect x="398" y="622" width="66" height="46" fill="#2a52a8" stroke="#dfe6f5" stroke-width="3"/><text class="sh" x="431" y="656">M4</text>
</g>

<!-- Marker and tooltip -->
<rect x="1013" y="626" width="106" height="43" rx="2" fill="#77776a" fill-opacity=".55"/>
<rect x="1017" y="629" width="98" height="37" fill="#f3f3f3" fill-opacity=".86"/>
<path d="M1017,642L1000,650L1017,655Z" fill="#777" fill-opacity=".35"/>
<text x="1039" y="652" font-size="14" fill="#2a87c8" textLength="54">1001645</text>
<path d="M992.5,658C990,646 981,640 981,631.5A11.7,11.7 0 0 1 1004.5,631.5C1004.5,640 995,646 992.5,658Z" fill="url(#pin)"/>
<circle cx="992.5" cy="632" r="4" fill="#fff"/>

<!-- Map overlays -->
<text x="613" y="959" font-size="16.5" font-weight="bold" fill="#444" textLength="76">mapquest</text>
<text x="1110" y="956" font-size="8.5" font-weight="bold" fill="#222" textLength="427" xml:space="preserve">©2015 MapQuest  -  Some data ©2015 "Map data © <tspan fill="#2a7fc0">OpenStreetMap</tspan> and contributors, <tspan fill="#2a7fc0">ODbL</tspan>" I <tspan fill="#2a7fc0">Terms</tspan></text>
</g>

<!-- Zoom control -->
<rect x="616" y="306" width="26" height="51" rx="3" fill="#fff" filter="url(#sd)"/>
<rect x="616" y="331" width="26" height="1" fill="#ddd"/>
<path d="M624,318H634M629,313V323" stroke="#222" stroke-width="2.2"/>
<path d="M624.5,344H633.5" stroke="#222" stroke-width="2.2"/>

<!-- Client legend -->
<rect x="1409" y="305" width="128" height="36" rx="5" fill="#fff" filter="url(#sd)"/>
<rect x="1415" y="317" width="12" height="12" rx="2" fill="#3b8cf8"/>
<path d="M1417.5,323L1420,326L1424.5,320" fill="none" stroke="#fff" stroke-width="1.8"/>
<text x="1430" y="325" font-size="12" fill="#666" textLength="97">The Test Client (1)</text>
</svg>
</body>
</html>
